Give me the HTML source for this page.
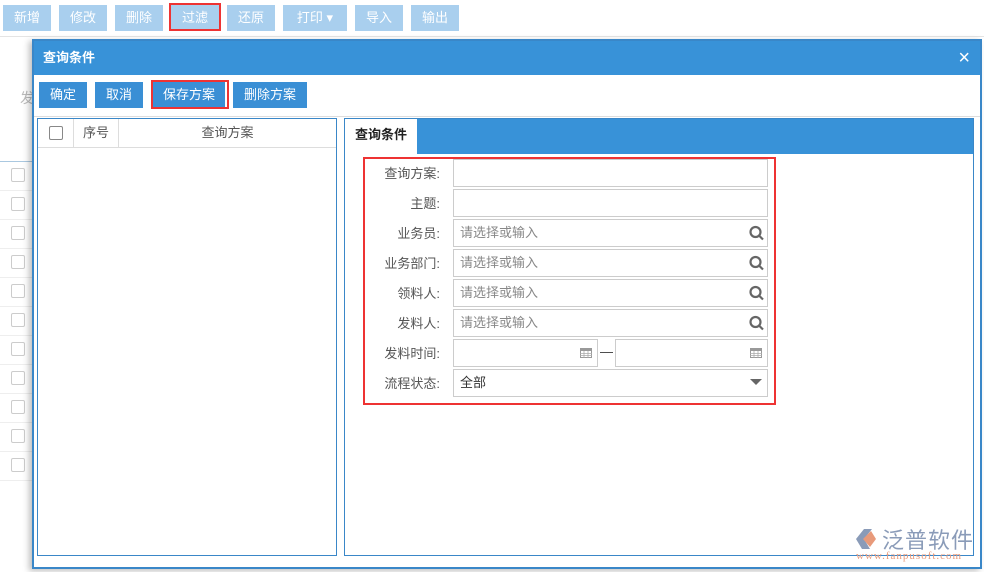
<!DOCTYPE html>
<html><head><meta charset="utf-8"><style>
*{box-sizing:border-box;margin:0;padding:0}
body{width:984px;height:572px;position:relative;overflow:hidden;background:#fff;font-family:"Liberation Sans","Noto Sans CJK SC",sans-serif;font-size:13px;color:#333}
.a{position:absolute}
.tb{background:#a9cfee;color:#fff;height:26px;line-height:26px;text-align:center;font-size:13px}
.bb{background:#3a8fd5;color:#fff;height:26px;line-height:26px;text-align:center;font-size:13px}
.red{border:2px solid #ee3333}
.cb{width:14px;height:14px;border:1px solid #ccc;border-radius:2px;background:#fff}
.lbl{text-align:right;width:82px;color:#555}
.inp{border:1px solid #ccc;height:28px;background:#fff;color:#888;padding-left:6px;line-height:26px}
</style></head><body>
<div class="a" style="left:0;top:0;width:984px;height:37px;background:#fff;border-bottom:1px solid #e4e4e4"></div>
<div class="a tb" style="left:3px;top:5px;width:48px">新增</div>
<div class="a tb" style="left:59px;top:5px;width:48px">修改</div>
<div class="a tb" style="left:115px;top:5px;width:48px">删除</div>
<div class="a tb" style="left:171px;top:5px;width:48px">过滤</div>
<div class="a red" style="left:169px;top:3px;width:52px;height:28px"></div>
<div class="a tb" style="left:227px;top:5px;width:48px">还原</div>
<div class="a tb" style="left:283px;top:5px;width:64px">打印 ▾</div>
<div class="a tb" style="left:355px;top:5px;width:48px">导入</div>
<div class="a tb" style="left:411px;top:5px;width:48px">输出</div>
<div class="a" style="left:20px;top:88px;color:#bbb;font-size:14px">发</div>
<div class="a" style="left:0;top:161px;width:40px;border-top:1px solid #aac8e0"></div>
<div class="a" style="left:0;top:162px;width:34px;height:320px">
 <div style="height:29px;border-bottom:1px solid #eee;padding:6px 0 0 11px"><div class="cb"></div></div>
 <div style="height:29px;border-bottom:1px solid #eee;padding:6px 0 0 11px"><div class="cb"></div></div>
 <div style="height:29px;border-bottom:1px solid #eee;padding:6px 0 0 11px"><div class="cb"></div></div>
 <div style="height:29px;border-bottom:1px solid #eee;padding:6px 0 0 11px"><div class="cb"></div></div>
 <div style="height:29px;border-bottom:1px solid #eee;padding:6px 0 0 11px"><div class="cb"></div></div>
 <div style="height:29px;border-bottom:1px solid #eee;padding:6px 0 0 11px"><div class="cb"></div></div>
 <div style="height:29px;border-bottom:1px solid #eee;padding:6px 0 0 11px"><div class="cb"></div></div>
 <div style="height:29px;border-bottom:1px solid #eee;padding:6px 0 0 11px"><div class="cb"></div></div>
 <div style="height:29px;border-bottom:1px solid #eee;padding:6px 0 0 11px"><div class="cb"></div></div>
 <div style="height:29px;border-bottom:1px solid #eee;padding:6px 0 0 11px"><div class="cb"></div></div>
 <div style="height:29px;border-bottom:1px solid #eee;padding:6px 0 0 11px"><div class="cb"></div></div>
</div>
<div class="a" style="left:32px;top:39px;width:950px;height:530px;border:2px solid #3a87c8;background:#fff;box-shadow:-3px 2px 6px rgba(0,0,0,.25)">
 <div class="a" style="left:0;top:0;width:946px;height:34px;background:#3892d8;color:#fff;font-weight:bold;font-size:13px;line-height:34px;padding-left:9px">查询条件<span style="position:absolute;right:10px;top:0;font-weight:normal;font-size:20px">×</span></div>
 <div class="a" style="left:0;top:75px;width:946px;border-top:1px solid #ddd"></div>
</div>
<div class="a bb" style="left:39px;top:82px;width:48px">确定</div>
<div class="a bb" style="left:95px;top:82px;width:48px">取消</div>
<div class="a bb" style="left:153px;top:82px;width:72px">保存方案</div>
<div class="a red" style="left:151px;top:80px;width:78px;height:29px"></div>
<div class="a bb" style="left:233px;top:82px;width:74px">删除方案</div>
<div class="a" style="left:37px;top:118px;width:300px;height:438px;border:1px solid #3a87c8;background:#fff">
 <div style="height:29px;border-bottom:1px solid #ddd;display:flex;line-height:28px">
  <div style="width:36px;border-right:1px solid #ddd;padding:7px 0 0 11px"><div class="cb" style="border-color:#888"></div></div>
  <div style="width:45px;border-right:1px solid #ddd;text-align:center;color:#555">序号</div>
  <div style="flex:1;text-align:center;color:#555">查询方案</div>
 </div>
</div>
<div class="a" style="left:344px;top:118px;width:630px;height:438px;border:1px solid #3a87c8;background:#fff">
 <div style="height:35px;background:#3892d8;position:relative"><div style="position:absolute;left:0;top:0;width:72px;height:35px;background:#fff;font-weight:bold;color:#222;line-height:32px;padding-left:10px">查询条件</div></div>
</div>
<div class="a red" style="left:363px;top:157px;width:413px;height:248px"></div>
<div class="a lbl" style="left:358px;top:163px">查询方案:</div>
<div class="a inp" style="left:453px;top:159px;width:315px"></div>
<div class="a lbl" style="left:358px;top:193px">主题:</div>
<div class="a inp" style="left:453px;top:189px;width:315px"></div>
<div class="a lbl" style="left:358px;top:223px">业务员:</div>
<div class="a inp" style="left:453px;top:219px;width:315px">请选择或输入</div>
<div class="a lbl" style="left:358px;top:253px">业务部门:</div>
<div class="a inp" style="left:453px;top:249px;width:315px">请选择或输入</div>
<div class="a lbl" style="left:358px;top:283px">领料人:</div>
<div class="a inp" style="left:453px;top:279px;width:315px">请选择或输入</div>
<div class="a lbl" style="left:358px;top:313px">发料人:</div>
<div class="a inp" style="left:453px;top:309px;width:315px">请选择或输入</div>
<svg class="a" style="left:749px;top:225px" width="17" height="110"><g fill="none" stroke="#666" stroke-width="2.2"><circle cx="6.5" cy="7" r="5"/><line x1="10" y1="10.5" x2="14" y2="14.5"/><circle cx="6.5" cy="37" r="5"/><line x1="10" y1="40.5" x2="14" y2="44.5"/><circle cx="6.5" cy="67" r="5"/><line x1="10" y1="70.5" x2="14" y2="74.5"/><circle cx="6.5" cy="97" r="5"/><line x1="10" y1="100.5" x2="14" y2="104.5"/></g></svg>
<div class="a lbl" style="left:358px;top:343px">发料时间:</div>
<div class="a inp" style="left:453px;top:339px;width:145px"></div>
<div class="a" style="left:600px;top:344px;color:#333">—</div>
<div class="a inp" style="left:615px;top:339px;width:153px"></div>
<svg class="a" style="left:580px;top:346px" width="12" height="12"><rect x="0.5" y="2.5" width="11" height="9" fill="#fff" stroke="#999"/><rect x="0.5" y="2.5" width="11" height="2.5" fill="#999"/><path d="M0 7.5H12M0 9.5H12M4 5V12M8 5V12" stroke="#aaa" stroke-width=".8"/></svg>
<svg class="a" style="left:750px;top:346px" width="12" height="12"><rect x="0.5" y="2.5" width="11" height="9" fill="#fff" stroke="#999"/><rect x="0.5" y="2.5" width="11" height="2.5" fill="#999"/><path d="M0 7.5H12M0 9.5H12M4 5V12M8 5V12" stroke="#aaa" stroke-width=".8"/></svg>
<div class="a lbl" style="left:358px;top:373px">流程状态:</div>
<div class="a inp" style="left:453px;top:369px;width:315px;color:#333">全部</div>
<div class="a" style="left:750px;top:379px;width:0;height:0;border-left:6px solid transparent;border-right:6px solid transparent;border-top:6px solid #666"></div>
<svg class="a" style="left:852px;top:527px" width="28" height="24"><path d="M4 12 L12 2 H20 L12 12 L18 22 H10 Z" fill="#8a9bb8"/><path d="M11 12 L19 4 L24 12 L18 20 Z" fill="#e89a7a"/></svg>
<div class="a" style="left:882px;top:523px;font-size:22px;color:#8a9bb8;letter-spacing:1px">泛普软件</div>
<div class="a" style="left:856px;top:550px;font-size:11px;color:#e89a7a;font-family:'Liberation Serif',serif;letter-spacing:1px">www.fanpusoft.com</div>
</body></html>
